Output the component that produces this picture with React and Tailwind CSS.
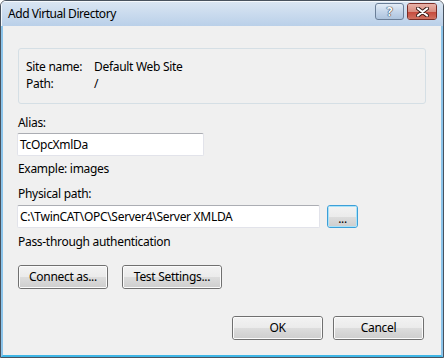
import React from "react";

const font = { fontFamily: '"Segoe UI", "Noto Sans", "Open Sans", sans-serif' };

function WinButton({ children, className = "", focused = false }) {
  return (
    <div
      className={
        "relative flex items-center justify-center rounded-[3px] border text-[12px] text-black " +
        (focused ? "border-[#3c9fd8] " : "border-[#707070] ") +
        className
      }
    >
      <div
        className={
          "absolute inset-0 rounded-[2px] border " +
          (focused ? "border-[#a9e2f8]" : "border-[#fbfbfb]")
        }
      >
        <div className="h-1/2 bg-gradient-to-b from-[#f2f2f2] to-[#ebebeb]" />
        <div className="h-1/2 bg-gradient-to-b from-[#dddddd] to-[#cfcfcf]" />
      </div>
      <span className="relative leading-none">{children}</span>
    </div>
  );
}

export default function App() {
  return (
    <div className="w-[444px] h-[358px] bg-white" style={font}>
      <div className="w-[444px] h-[358px] flex flex-col rounded-t-[6px] border border-[#48525e] overflow-hidden bg-[#f0f0f0]">
        {/* title bar */}
        <div className="h-[25px] shrink-0 flex items-center bg-gradient-to-b from-[#d9e5f2] to-[#bad0e9] border-l border-t border-[#f4f8fc]">
          <span className="ml-[6px] text-[12px] text-black leading-none tracking-[-0.45px]">Add Virtual Directory</span>
          <div className="ml-auto mr-[6px] mt-[-5px] flex items-center gap-[3px]">
            <div className="w-[29px] h-[17px] rounded-[3px] border border-[#6b7f98] bg-gradient-to-b from-[#e4edf7] via-[#c5d6ea] to-[#aec4de] flex items-center justify-center">
              <span
                className="text-[12px] font-bold leading-none text-white"
                style={{ textShadow: "0 0 1px #2f3a48, 0 0 1px #2f3a48, 0 0 1px #2f3a48" }}
              >
                ?
              </span>
            </div>
            <div className="w-[30px] h-[17px] rounded-[3px] border border-[#7a2d26] flex flex-col overflow-hidden relative">
              <div className="h-1/2 bg-gradient-to-b from-[#e9b2a8] to-[#d78b7e]" />
              <div className="h-1/2 bg-gradient-to-b from-[#c5493c] to-[#d0705f]" />
              <svg className="absolute left-[8px] top-[3px]" width="13" height="10" viewBox="0 0 13 10">
                <path d="M2 1.5 L11 8.5 M11 1.5 L2 8.5" stroke="#3a1e1a" strokeWidth="4" strokeLinecap="round" />
                <path d="M2 1.5 L11 8.5 M11 1.5 L2 8.5" stroke="#ffffff" strokeWidth="2.2" strokeLinecap="round" />
              </svg>
            </div>
          </div>
        </div>

        {/* body */}
        <div className="flex-1 flex flex-col border-x-2 border-b-[2px] border-x-[#8cc4ea] border-b-[#3fb6e6] bg-[#f0f0f0] pl-[14px] pr-[15px] text-[12px] text-black tracking-[-0.3px]">
          {/* group box */}
          <div className="mt-[22px] ml-[1px] h-[56px] rounded-[3px] border border-[#d5dfe5] pl-[7px] pt-[9px] leading-[17px]">
            <div className="flex">
              <span className="w-[68px]">Site name:</span>
              <span>Default Web Site</span>
            </div>
            <div className="flex">
              <span className="w-[68px]">Path:</span>
              <span>/</span>
            </div>
          </div>

          <div className="mt-[10px] ml-[1px] leading-[17px]">Alias:</div>
          <div className="mt-[2px] w-[187px] h-[23px] rounded-[2px] border border-[#e2e3ea] border-t-[#abadb3] bg-white flex items-center pl-[2px]">
            TcOpcXmlDa
          </div>
          <div className="mt-[4px] ml-[1px] leading-[17px]">Example: images</div>

          <div className="mt-[8px] ml-[1px] leading-[17px]">Physical path:</div>
          <div className="mt-[3px] flex items-center gap-[7px]">
            <div className="w-[303px] h-[23px] rounded-[2px] border border-[#e2e3ea] border-t-[#abadb3] bg-white flex items-center pl-[2px]">
              C:\TwinCAT\OPC\Server4\Server XMLDA
            </div>
            <WinButton focused className="w-[31px] h-[23px]">
              <span className="relative top-[2px]">...</span>
            </WinButton>
          </div>
          <div className="mt-[5px] ml-[1px] leading-[17px]">Pass-through authentication</div>

          <div className="mt-[15px] ml-[1px] flex gap-[14px]">
            <WinButton className="w-[90px] h-[24px]">Connect as...</WinButton>
            <WinButton className="w-[100px] h-[24px]">Test Settings...</WinButton>
          </div>

          <div className="mt-[27px] flex justify-end gap-[10px] pr-[2px]">
            <WinButton className="w-[91px] h-[24px]">OK</WinButton>
            <WinButton className="w-[91px] h-[24px]">Cancel</WinButton>
          </div>
        </div>
      </div>
    </div>
  );
}
